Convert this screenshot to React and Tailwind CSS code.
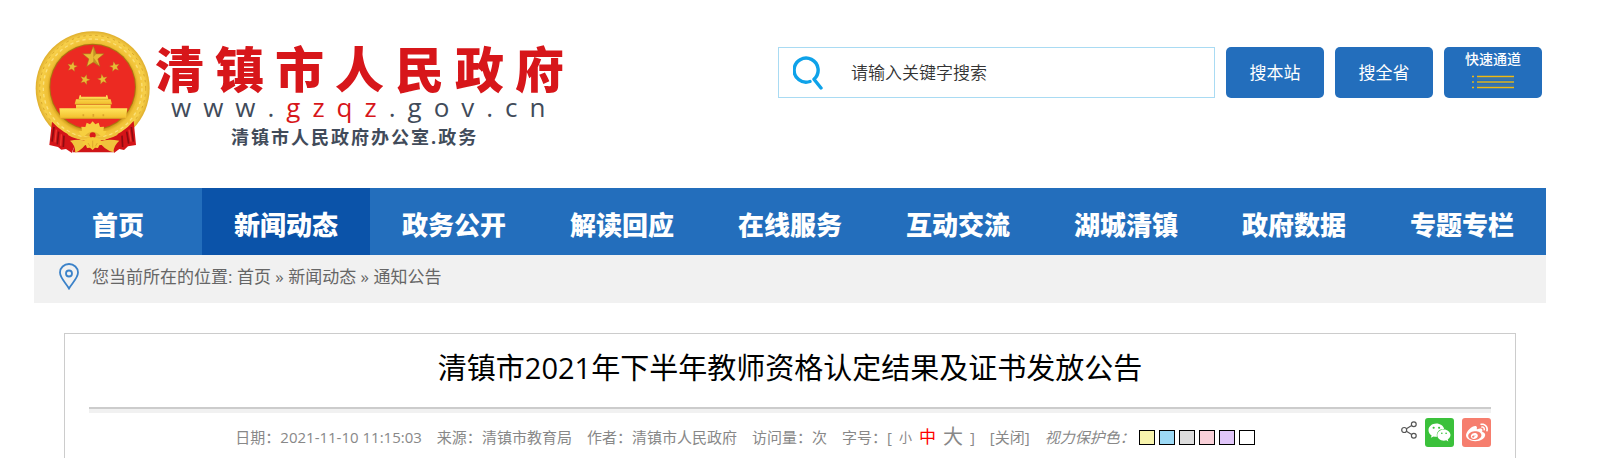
import React, { useState } from "react";
import { FaWeixin, FaWeibo } from "react-icons/fa";

const NAV_ITEMS = [
  "首页",
  "新闻动态",
  "政务公开",
  "解读回应",
  "在线服务",
  "互动交流",
  "湖城清镇",
  "政府数据",
  "专题专栏",
];

const CRUMBS = ["首页", "新闻动态", "通知公告"];

const META = [
  { label: "日期", value: "2021-11-10 11:15:03" },
  { label: "来源", value: "清镇市教育局" },
  { label: "作者", value: "清镇市人民政府" },
  { label: "访问量", value: "次" },
];

const FONT_SIZES = [
  { name: "小", className: "text-[13px]" },
  { name: "中", className: "text-[17px]" },
  { name: "大", className: "text-[20px]" },
];

const EYE_COLORS = [
  { name: "黄色", className: "bg-[#f8f4ac]" },
  { name: "蓝色", className: "bg-[#9cd9f5]" },
  { name: "灰色", className: "bg-[#dcdcdc]" },
  { name: "粉色", className: "bg-[#f9d0d8]" },
  { name: "紫色", className: "bg-[#e0c5f9]" },
  { name: "白色", className: "bg-white" },
];

const STAR = "M0 -10 L2.6 -3.2 L9.5 -3.1 L4 1.4 L5.9 8.1 L0 4.3 L-5.9 8.1 L-4 1.4 L-9.5 -3.1 L-2.6 -3.2 Z";

const Emblem = () => (
  <svg viewBox="15 18 345 366" className="w-[115px] h-[122px] shrink-0" role="img" aria-label="国徽">
    <defs>
      <radialGradient id="ring" cx="0.5" cy="0.5" r="0.5">
        <stop offset="0.74" stopColor="#d09a1a" />
        <stop offset="0.8" stopColor="#f0c035" />
        <stop offset="0.92" stopColor="#f7d04a" />
        <stop offset="1" stopColor="#dfae2c" />
      </radialGradient>
      <linearGradient id="gold" x1="0" y1="0" x2="0" y2="1">
        <stop offset="0" stopColor="#ffe45c" />
        <stop offset="1" stopColor="#f2bd2c" />
      </linearGradient>
    </defs>
    <circle cx="188" cy="190" r="171" fill="url(#ring)" />
    <circle cx="188" cy="190" r="159" fill="none" stroke="#d8a62c" strokeWidth="3" strokeDasharray="7 11" />
    <circle cx="188" cy="190" r="148" fill="none" stroke="#fbe07a" strokeWidth="4" strokeDasharray="10 9" />
    <circle cx="188" cy="186" r="130" fill="#a9760f" />
    <circle cx="188" cy="186" r="127" fill="#ec2a22" />
    <g fill="#e9bb35" stroke="#a9651b" strokeWidth="0.5">
      <path d={STAR} transform="translate(190 97) scale(3.4)" />
      <path d={STAR} transform="translate(127 125) rotate(12) scale(1.6)" />
      <path d={STAR} transform="translate(254 125) rotate(-12) scale(1.6)" />
      <path d={STAR} transform="translate(165 164) rotate(18) scale(1.6)" />
      <path d={STAR} transform="translate(218 163) rotate(-12) scale(1.6)" />
    </g>
    <path d="M190 62 L190 97 L199 86 Z M190 97 L210 125 L190 112 Z" fill="#a97818" opacity="0.6" />
    <g fill="url(#gold)">
      <path d="M149 211 H153 V215 H228 V211 H232 L235 223 H242 L246 238 H134 L138 223 H146 Z" />
      <path d="M138 239 H242 V251 H138 Z" />
      <path d="M88 250 H292 L288 280 H91 Z" />
    </g>
    <path d="M136 238 H244 M145 223 H236" stroke="#d19a24" strokeWidth="2" />
    <path d="M94 280 H286" stroke="#d6a028" strokeWidth="3" />
    <path d="M160 274 V268 M190 275 V267 M220 274 V268" stroke="#dca32b" strokeWidth="5" />
    <path d="M66 290 Q98 326 152 344 Q130 360 126 384 L108 372 L94 374 L84 366 L58 360 Z" fill="#d41418" />
    <path d="M311 288 Q280 325 225 344 Q246 360 252 384 L268 372 L282 375 L294 364 L318 360 Z" fill="#d41418" />
    <path d="M72 306 L66 350 M86 320 L82 358 M102 332 L100 366 M304 306 L310 350 M290 320 L296 356 M276 332 L278 366" stroke="#8d0c11" strokeWidth="5" />
    <path d="M79 314 L75 352 M94 328 L92 362 M297 314 L303 350" stroke="#f23a31" strokeWidth="4" />
    <path d="M136 346 H240 L250 382 H128 Z" fill="#cf1517" />
    <path d="M120 347 Q152 340 172 350 Q160 372 136 383 Q136 360 120 347 Z" fill="#f0c43c" />
    <path d="M268 347 Q232 340 208 350 Q220 372 250 382 Q252 360 268 347 Z" fill="#f0c43c" />
    <path d="M146 318 L156 318 L154 305 L166 306 L170 293 L180 298 L188 289 L196 298 L206 293 L210 306 L222 305 L220 318 L230 318 L222 333 L154 333 Z" fill="#f7cf40" />
    <path d="M164 333 Q188 308 212 333 Z" fill="#e5b233" />
    <path d="M110 318 Q150 342 176 334 L188 326 L200 334 Q228 342 266 318 L262 330 Q220 352 188 338 Q150 352 114 330 Z" fill="#efc03a" />
    <circle cx="188" cy="331" r="9" fill="#d91a1a" />
    <path d="M158 350 L172 340 L188 336 L204 340 L218 350 L217 359 L208 361 L204 369 L195 368 L188 375 L180 368 L171 369 L168 361 L158 358 Z" fill="#f5ca39" />
    <path d="M174 354 L180 364 M188 347 V368 M202 354 L196 364" stroke="#d39c28" strokeWidth="2" />
  </svg>
);

const SearchIcon = () => (
  <svg viewBox="0 0 30 34" className="w-[30px] h-[34px] shrink-0" fill="none" stroke="#0ea2e9" strokeWidth="3.4" aria-hidden="true">
    <path d="M17 25.5 A12 12 0 1 1 21 23.2 L28 32" strokeLinecap="round" strokeLinejoin="round" />
  </svg>
);

const PinIcon = () => (
  <svg viewBox="0 0 20 27" className="w-5 h-[27px] shrink-0" fill="none" stroke="#3b82c9" strokeWidth="1.8" aria-hidden="true">
    <path d="M10 25.5 C7 20 1 15 1 9.5 A9 8.5 0 0 1 19 9.5 C19 15 13 20 10 25.5 Z" />
    <circle cx="10" cy="10.5" r="3" />
  </svg>
);

const ListIcon = () => (
  <svg viewBox="0 0 42 14" className="w-[42px] h-[14px]" aria-hidden="true">
    <path d="M0 1.5 H2 M5 1.5 H42 M0 12.5 H2 M5 12.5 H42" stroke="#f0b90f" strokeWidth="1.4" />
    <path d="M0 7 H2 M5 7 H42" stroke="#ada147" strokeWidth="2" />
    <path d="M5 4 H42 M5 10 H42" stroke="#4175a4" strokeWidth="1.5" />
  </svg>
);

const ShareIcon = () => (
  <svg viewBox="0 0 16 18" className="w-4 h-[18px]" fill="none" stroke="#555" strokeWidth="1.2" aria-hidden="true">
    <circle cx="3.2" cy="9" r="2.5" />
    <circle cx="12.8" cy="3.2" r="2.4" />
    <circle cx="12.8" cy="14.8" r="2.4" />
    <path d="M5.4 7.7 L10.7 4.5 M5.4 10.3 L10.7 13.5" />
  </svg>
);

const App = () => {
  const [keyword, setKeyword] = useState("");
  const [fontSize, setFontSize] = useState("中");

  return (
    <div className="min-h-screen flex flex-col bg-white pl-[34px] pr-[67px] font-['Open_Sans','Noto_Sans_CJK_SC',sans-serif]">
      <header className="flex justify-between items-start h-[188px] pr-1">
        <div className="flex pt-[31px] pl-px">
          <Emblem />
          <div className="pt-[14px] pl-[5px] whitespace-nowrap text-[#414b5a]">
            <h1 className="text-[49px] leading-[48px] tracking-[11px] font-black text-[#d7161a]">清镇市人民政府</h1>
            <p className="text-[26px] leading-[28px] tracking-[12px] pl-4">
              www.<span className="text-[#d7161a]">gzqz</span>.gov.cn
            </p>
            <p className="text-[18px] leading-[32px] tracking-[2px] font-bold pl-[76px]">清镇市人民政府办公室.政务</p>
          </div>
        </div>

        <form className="flex gap-[11px] pt-[47px] text-[17px]" onSubmit={(e) => e.preventDefault()}>
          <label className="flex items-center w-[437px] h-[51px] border border-[#a9dbf3] pl-[14px] gap-[28px]">
            <SearchIcon />
            <input
              type="text"
              aria-label="关键字"
              className="flex-1 min-w-0 outline-none placeholder:text-[#333] font-[350]"
              placeholder="请输入关键字搜索"
              value={keyword}
              onChange={(e) => setKeyword(e.target.value)}
            />
          </label>
          <button type="submit" className="w-[98px] h-[51px] rounded-[5px] bg-[#236ebc] text-white cursor-pointer">
            搜本站
          </button>
          <button type="submit" className="w-[98px] h-[51px] rounded-[5px] bg-[#236ebc] text-white cursor-pointer">
            搜全省
          </button>
          <button type="button" className="w-[98px] h-[51px] rounded-[5px] bg-[#236ebc] text-white cursor-pointer flex flex-col items-center gap-[5px] pt-px">
            <span className="text-[14px] leading-[22px] font-medium">快速通道</span>
            <ListIcon />
          </button>
        </form>
      </header>

      <nav className="grid grid-cols-9 bg-[#236ebc]">
        {NAV_ITEMS.map((item) => (
          <a
            key={item}
            href="#"
            className={`h-[67px] pt-[7px] text-center text-[26px] leading-[60px] font-black text-white whitespace-nowrap hover:bg-[#0b53a9] ${
              item === "新闻动态" ? "bg-[#0b53a9]" : ""
            }`}
          >
            {item}
          </a>
        ))}
      </nav>

      <div className="flex items-start h-12 bg-[#f1f1f1] pl-[25px] pt-2 gap-[13px] text-[17px] leading-[28px] text-[#666]">
        <PinIcon />
        <p>
          您当前所在的位置:{" "}
          {CRUMBS.map((crumb, index) => (
            <React.Fragment key={crumb}>
              {index > 0 && " » "}
              <a href="#">{crumb}</a>
            </React.Fragment>
          ))}
        </p>
      </div>

      <article className="flex-1 mx-[30px] mt-[30px] px-6 border border-b-0 border-[#ccc]">
        <h2 className="pb-[6px] text-center text-[29px] leading-[67px] font-normal text-black">
          清镇市2021年下半年教师资格认定结果及证书发放公告
        </h2>
        <div className="h-[6px] border-t-2 border-[#ccc] bg-[#f1f1f1]" />

        <div className="flex items-start pt-[5px]">
          <div className="flex-1 flex justify-center items-center gap-[15px] h-5 mt-[9px] text-[15px] text-[#888] whitespace-nowrap">
            {META.map((item) => (
              <span key={item.label}>
                {item.label}：{item.value}
              </span>
            ))}
            <span className="flex items-center gap-[7px] leading-[20px]">
              <span>字号：[</span>
              {FONT_SIZES.map((size) => (
                <button
                  key={size.name}
                  type="button"
                  className={`cursor-pointer ${size.className} ${fontSize === size.name ? "text-[#f00]" : ""}`}
                  onClick={() => setFontSize(size.name)}
                >
                  {size.name}
                </button>
              ))}
              <span>]</span>
            </span>
            <a href="#">[关闭]</a>
            <span className="flex items-center gap-1">
              <em>视力保护色：</em>
              {EYE_COLORS.map((color) => (
                <button
                  key={color.name}
                  type="button"
                  title={color.name}
                  className={`w-4 h-[15px] border border-black cursor-pointer ${color.className}`}
                />
              ))}
            </span>
          </div>

          <div className="flex items-start gap-2 text-white">
            <button type="button" title="分享" className="pt-[3px] cursor-pointer">
              <ShareIcon />
            </button>
            <button type="button" title="微信" className="w-[29px] h-[29px] rounded-[3px] bg-[#3bc13b] flex items-center justify-center text-[23px] cursor-pointer">
              <FaWeixin />
            </button>
            <button type="button" title="微博" className="w-[29px] h-[29px] rounded-[3px] bg-[#f67e6e] flex items-center justify-center text-[22px] cursor-pointer">
              <FaWeibo />
            </button>
          </div>
        </div>
      </article>
    </div>
  );
};

export default App;
